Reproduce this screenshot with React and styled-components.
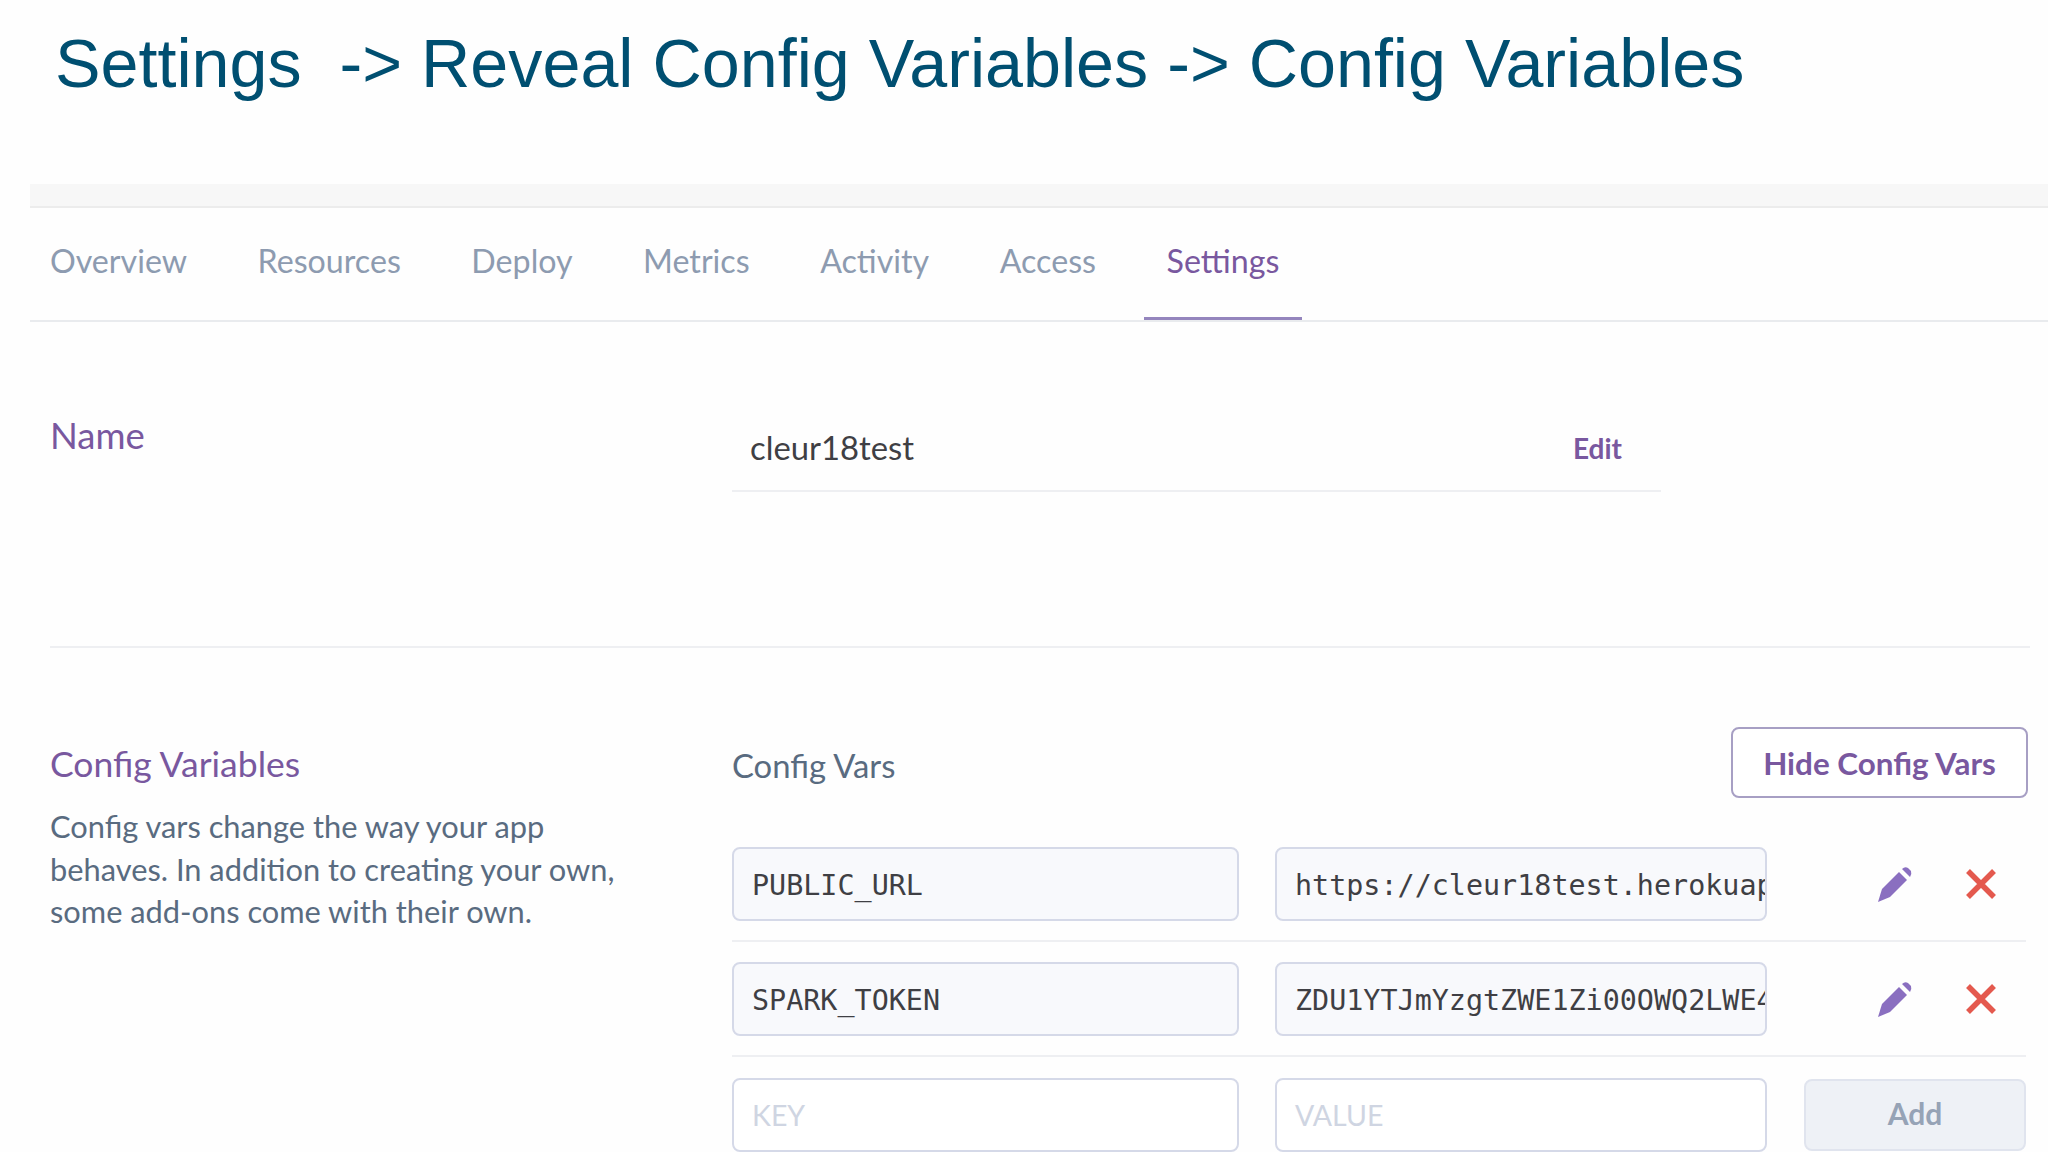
import React from "react";
import styled, { createGlobalStyle } from "styled-components";

const Global = createGlobalStyle`
  html, body { margin: 0; padding: 0; background: #fefefe; }
  body { font-family: "Lato", "Open Sans", sans-serif; width: 2048px; height: 1152px; overflow: hidden; }
`;

const Title = styled.h1`
  margin: 0;
  padding: 20px 0 0 55px;
  height: 184px;
  box-sizing: border-box;
  font-family: "Liberation Sans", Arial, sans-serif;
  font-weight: 400;
  font-size: 68.25px;
  line-height: 86px;
  color: #004f71;
  white-space: pre;
`;

const Panel = styled.main`
  margin-left: 30px;
`;

const Strip = styled.div`
  height: 22px;
  background: #f7f7f7;
  border-bottom: 2px solid #ececec;
`;

const Tabs = styled.nav`
  display: flex;
  gap: 24.5px;
  height: 112px;
  border-bottom: 2px solid #e9ebee;
  box-sizing: content-box;
`;

const Tab = styled.a`
  display: flex;
  align-items: center;
  height: 112px;
  padding: 0 23px 4px ${(p) => (p.$first ? "20px" : "23px")};
  margin-bottom: -2px;
  box-sizing: border-box;
  font-size: 32.2px;
  color: ${(p) => (p.$active ? "#79589f" : "#8d9bb0")};
  border-bottom: 3px solid ${(p) => (p.$active ? "#9485bd" : "transparent")};
`;

const Section = styled.section`
  display: grid;
  grid-template-columns: 682px 1294px;
  margin: 0 18px 0 20px;
`;

const NameSection = styled(Section)`
  padding-top: 93px;
  height: 326px;
  box-sizing: border-box;
  border-bottom: 2px solid #eeeff2;
`;

const Heading = styled.h2`
  margin: 0;
  font-weight: 400;
  font-size: 35.5px;
  line-height: 40px;
  color: #79589f;
`;

const NameHeading = styled(Heading)`
  font-size: 36.5px;
`;

const NameRow = styled.div`
  display: flex;
  justify-content: space-between;
  align-items: center;
  width: 929px;
  height: 62px;
  margin-top: 15px;
  padding: 0 39px 25px 18px;
  box-sizing: border-box;
  border-bottom: 2px solid #eeeff2;
  font-size: 32.8px;
  color: #3f3f44;
`;

const EditLink = styled.a`
  font-size: 28px;
  font-weight: 700;
  color: #79589f;
`;

const ConfigSection = styled(Section)`
  padding-top: 78px;
`;

const Intro = styled.div`
  padding-top: 18px;
`;

const Description = styled.p`
  margin: 22px 0 0;
  width: 584px;
  font-size: 30.8px;
  line-height: 42.5px;
  color: #596b80;
`;

const VarsHeader = styled.div`
  display: flex;
  justify-content: space-between;
  align-items: center;
  height: 70px;
  margin-bottom: 31px;
`;

const VarsTitle = styled.h3`
  margin: 8px 0 0;
  font-weight: 400;
  font-size: 32.8px;
  color: #596b80;
`;

const HideButton = styled.button`
  width: 297px;
  height: 71px;
  margin: 2px -2px 0 0;
  padding-top: 2px;
  background: #fff;
  border: 2px solid #a79fc4;
  border-radius: 8px;
  font-family: inherit;
  font-size: 31.4px;
  font-weight: 700;
  color: #79589f;
`;

const VarRow = styled.div`
  display: grid;
  grid-template-columns: 507px 492px 1fr;
  column-gap: 36px;
  align-items: center;
  height: 115px;
  box-sizing: border-box;
  width: 1294px;
  border-bottom: ${(p) => (p.$last ? "none" : "2px solid #eeeff2")};
`;

const Field = styled.div`
  height: 74px;
  box-sizing: border-box;
  display: flex;
  align-items: center;
  padding: ${(p) => (p.$empty ? "0" : "3px")} 0 0 18px;
  overflow: hidden;
  white-space: nowrap;
  background: ${(p) => (p.$empty ? "#fff" : "#f8f9fc")};
  border: 2px solid #d5d9e8;
  border-radius: 8px;
  font-family: "DejaVu Sans Mono", "Liberation Mono", monospace;
  font-size: 28.4px;
  color: #3f3f44;
`;

const Placeholder = styled.span`
  font-family: "Lato", sans-serif;
  font-size: 28.5px;
  color: #cfd5e2;
`;

const Actions = styled.div`
  display: flex;
  align-items: center;
  gap: 53px;
  padding-left: 75px;
`;

const AddButton = styled.button`
  justify-self: end;
  width: 222px;
  height: 72px;
  padding-bottom: 4px;
  background: #eef1f6;
  border: 2px solid #e0e4ee;
  border-radius: 8px;
  font-family: inherit;
  font-size: 30px;
  font-weight: 700;
  color: #96a3b6;
`;

const IconBox = styled.svg`
  display: block;
  flex: none;
`;

const Pencil = () => (
  <IconBox width="34" height="36" viewBox="0 0 34 36">
    <path d="M0 36 L4 23 L21 6 L29 14 L12 31 Z" fill="#8a6fc0" />
    <path d="M24 3 Q27 0 30 2 L33 5 Q34 8 32 11 Z" fill="#8a6fc0" />
  </IconBox>
);

const Cross = () => (
  <IconBox width="32" height="32" viewBox="0 0 32 32">
    <path d="M3 3 L29 29 M29 3 L3 29" stroke="#e4594e" strokeWidth="5.5" fill="none" />
  </IconBox>
);

const tabs = ["Overview", "Resources", "Deploy", "Metrics", "Activity", "Access", "Settings"];
const vars = [
  ["PUBLIC_URL", "https://cleur18test.herokuapp.com"],
  ["SPARK_TOKEN", "ZDU1YTJmYzgtZWE1Zi00OWQ2LWE4ZTItYjU"],
];

export default function App() {
  return (
    <>
      <Global />
      <Title>{"Settings  -> Reveal Config Variables -> Config Variables"}</Title>
      <Panel>
        <Strip />
        <Tabs>
          {tabs.map((t, i) => (
            <Tab key={t} $first={i === 0} $active={t === "Settings"}>{t}</Tab>
          ))}
        </Tabs>
        <NameSection>
          <NameHeading>Name</NameHeading>
          <NameRow>
            <span>cleur18test</span>
            <EditLink>Edit</EditLink>
          </NameRow>
        </NameSection>
        <ConfigSection>
          <Intro>
            <Heading>Config Variables</Heading>
            <Description>
              Config vars change the way your app behaves. In addition to creating your own, some add-ons come with their own.
            </Description>
          </Intro>
          <div>
            <VarsHeader>
              <VarsTitle>Config Vars</VarsTitle>
              <HideButton>Hide Config Vars</HideButton>
            </VarsHeader>
            {vars.map(([k, v]) => (
              <VarRow key={k}>
                <Field>{k}</Field>
                <Field>{v}</Field>
                <Actions>
                  <Pencil />
                  <Cross />
                </Actions>
              </VarRow>
            ))}
            <VarRow $last>
              <Field $empty><Placeholder>KEY</Placeholder></Field>
              <Field $empty><Placeholder>VALUE</Placeholder></Field>
              <AddButton>Add</AddButton>
            </VarRow>
          </div>
        </ConfigSection>
      </Panel>
    </>
  );
}
